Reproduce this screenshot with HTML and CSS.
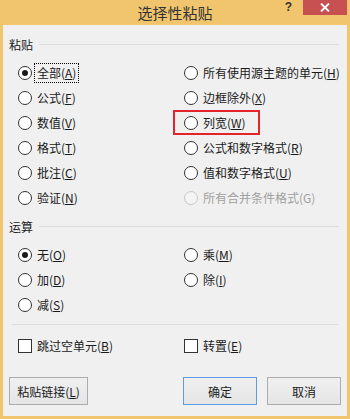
FILE: index.html
```html
<!DOCTYPE html>
<html>
<head>
  <meta charset="utf-8">
  <title>选择性粘贴</title>
  <link rel="stylesheet" href="styles.css">
</head>
<body>
  <div class="dialog">
    <div class="titlebar">
      <span></span>
      <span class="title">选择性粘贴</span>
      <div class="title-btns">
        <span class="help">?</span>
        <span class="close">
          <svg width="10" height="9" viewBox="0 0 10 9"><path d="M1 0.5 L9 8.5 M9 0.5 L1 8.5" stroke="#fff" stroke-width="1.8"/></svg>
        </span>
      </div>
    </div>

    <div class="client">
      <div class="group-head"><span>粘贴</span><i class="rule"></i></div>
      <div class="grid">
        <label class="opt"><span class="radio on"></span><span class="txt focus">全部(<u>A</u>)</span></label>
        <label class="opt"><span class="radio"></span><span class="txt">所有使用源主题的单元(<u>H</u>)</span></label>
        <label class="opt"><span class="radio"></span><span class="txt">公式(<u>F</u>)</span></label>
        <label class="opt"><span class="radio"></span><span class="txt">边框除外(<u>X</u>)</span></label>
        <label class="opt"><span class="radio"></span><span class="txt">数值(<u>V</u>)</span></label>
        <label class="opt marked"><span class="radio"></span><span class="txt">列宽(<u>W</u>)</span></label>
        <label class="opt"><span class="radio"></span><span class="txt">格式(<u>T</u>)</span></label>
        <label class="opt"><span class="radio"></span><span class="txt">公式和数字格式(<u>R</u>)</span></label>
        <label class="opt"><span class="radio"></span><span class="txt">批注(<u>C</u>)</span></label>
        <label class="opt"><span class="radio"></span><span class="txt">值和数字格式(<u>U</u>)</span></label>
        <label class="opt"><span class="radio"></span><span class="txt">验证(<u>N</u>)</span></label>
        <label class="opt disabled"><span class="radio"></span><span class="txt">所有合并条件格式(G)</span></label>
      </div>

      <div class="group-head second"><span>运算</span><i class="rule"></i></div>
      <div class="grid">
        <label class="opt"><span class="radio on"></span><span class="txt">无(<u>O</u>)</span></label>
        <label class="opt"><span class="radio"></span><span class="txt">乘(<u>M</u>)</span></label>
        <label class="opt"><span class="radio"></span><span class="txt">加(<u>D</u>)</span></label>
        <label class="opt"><span class="radio"></span><span class="txt">除(<u>I</u>)</span></label>
        <label class="opt"><span class="radio"></span><span class="txt">减(<u>S</u>)</span></label>
      </div>

      <div class="sep"></div>

      <div class="grid checks">
        <label class="opt"><span class="check"></span><span class="txt">跳过空单元(<u>B</u>)</span></label>
        <label class="opt"><span class="check"></span><span class="txt">转置(<u>E</u>)</span></label>
      </div>

      <div class="buttons">
        <button class="btn link">粘贴链接(<u>L</u>)</button>
        <div class="right-btns">
          <button class="btn default">确定</button>
          <button class="btn">取消</button>
        </div>
      </div>
    </div>
  </div>
</body>
</html>
```

FILE: styles.css
```css
body {
  margin: 0;
  font-family: "Noto Sans CJK SC", "Microsoft YaHei", sans-serif;
  font-size: 12px;
  color: #1a1a1a;
}

.dialog {
  width: 350px;
  height: 419px;
  box-sizing: border-box;
  background-color: #f1c56d;
  padding: 0 3px 3px 3px;
  display: flex;
  flex-direction: column;
}

.titlebar {
  height: 25px;
  display: grid;
  grid-template-columns: 1fr auto 1fr;
  align-items: start;
}

.title {
  font-size: 15px;
  line-height: 25px;
  color: #333333;
}

.title-btns {
  display: flex;
  justify-content: flex-end;
  align-items: flex-start;
}

.help {
  font-family: "Liberation Sans", sans-serif;
  font-weight: bold;
  font-size: 12px;
  color: #333333;
  margin-right: 11px;
  line-height: 15px;
}

.close {
  width: 44px;
  height: 15px;
  background-color: #c75050;
  display: flex;
  align-items: center;
  justify-content: center;
}

.client {
  flex: 1;
  background-color: #f0f0f0;
  padding: 0 6px;
}

.group-head {
  display: flex;
  align-items: center;
  height: 18px;
  margin-top: 10px;
}

.group-head.second {
  margin-top: 7px;
}

.rule {
  flex: 1;
  height: 1px;
  background-color: #dcdcdc;
  margin-left: 6px;
  margin-right: 2px;
}

.grid {
  display: grid;
  grid-template-columns: 166px 1fr;
  margin: 7px 0 0 9px;
}

.opt {
  height: 25px;
  display: flex;
  align-items: center;
  position: relative;
  white-space: nowrap;
}

.radio {
  flex: none;
  width: 12px;
  height: 12px;
  border: 1px solid #333333;
  border-radius: 50%;
  background-color: #ffffff;
  box-sizing: content-box;
  margin-right: 3px;
  display: flex;
  align-items: center;
  justify-content: center;
}

.radio.on::after {
  content: "";
  width: 6px;
  height: 6px;
  border-radius: 50%;
  background-color: #1a1a1a;
}

.txt {
  padding: 1px 2px;
  line-height: 16px;
}

.txt u {
  text-decoration: underline;
}

.focus {
  outline: 1px dotted #000000;
}

.disabled .txt {
  color: #a0a0a0;
}

.disabled .radio {
  border-color: #c8c8c8;
  background-color: #f4f4f4;
}

.marked::after {
  content: "";
  position: absolute;
  left: -11px;
  top: 0;
  width: 87px;
  height: 25px;
  box-sizing: border-box;
  border: 2px solid #e3242b;
}

.sep {
  height: 1px;
  background-color: #dcdcdc;
  margin: 7px 3px 0 3px;
}

.grid.checks {
  margin-top: 8px;
}

.check {
  flex: none;
  width: 12px;
  height: 12px;
  border: 1px solid #333333;
  background-color: #ffffff;
  margin-right: 3px;
}

.buttons {
  display: flex;
  justify-content: space-between;
  margin-top: 19px;
}

.right-btns {
  display: flex;
  gap: 10px;
}

.btn {
  height: 28px;
  width: 74px;
  font-family: inherit;
  font-size: 12px;
  color: #1a1a1a;
  border: 1px solid #acacac;
  background: linear-gradient(#f0f0f0, #e5e5e5);
  padding: 0;
}

.btn.link {
  width: 79px;
}

.btn.default {
  border-color: #5b9de0;
}
```
